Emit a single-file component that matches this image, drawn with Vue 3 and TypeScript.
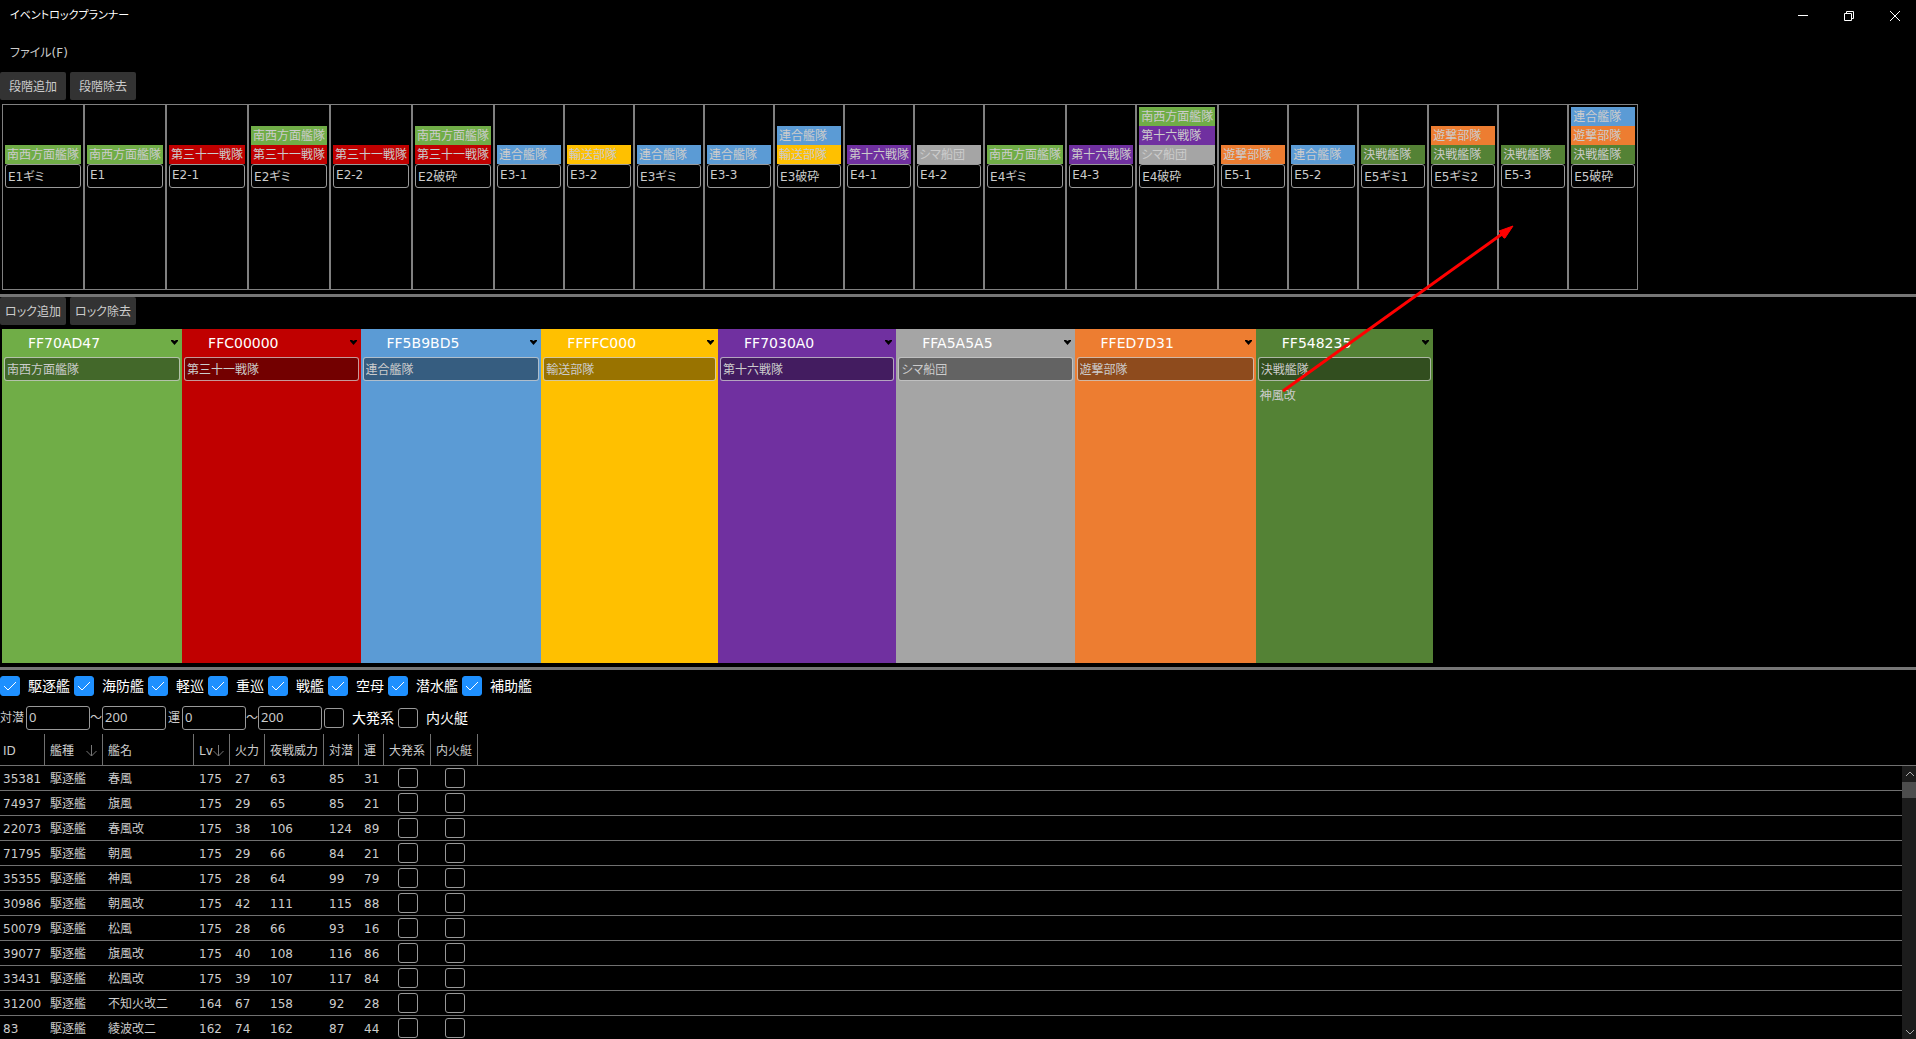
<script setup lang="ts">
import { ref } from 'vue'

interface Lock {
  color: string
  name: string
  ships: string[]
}

interface Stage {
  name: string
  locks: number[]
}

interface Ship {
  id: number
  type: string
  name: string
  lv: number
  fire: number
  night: number
  asw: number
  luck: number
}

const locks = ref<Lock[]>([
  { color: '70AD47', name: '南西方面艦隊', ships: [] },
  { color: 'C00000', name: '第三十一戦隊', ships: [] },
  { color: '5B9BD5', name: '連合艦隊', ships: [] },
  { color: 'FFC000', name: '輸送部隊', ships: [] },
  { color: '7030A0', name: '第十六戦隊', ships: [] },
  { color: 'A5A5A5', name: 'シマ船団', ships: [] },
  { color: 'ED7D31', name: '遊撃部隊', ships: [] },
  { color: '548235', name: '決戦艦隊', ships: ['神風改'] },
])

const palette = locks.value.map((lock) => lock.color)

const stages = ref<Stage[]>([
  { name: 'E1ギミ', locks: [0] },
  { name: 'E1', locks: [0] },
  { name: 'E2-1', locks: [1] },
  { name: 'E2ギミ', locks: [0, 1] },
  { name: 'E2-2', locks: [1] },
  { name: 'E2破砕', locks: [0, 1] },
  { name: 'E3-1', locks: [2] },
  { name: 'E3-2', locks: [3] },
  { name: 'E3ギミ', locks: [2] },
  { name: 'E3-3', locks: [2] },
  { name: 'E3破砕', locks: [2, 3] },
  { name: 'E4-1', locks: [4] },
  { name: 'E4-2', locks: [5] },
  { name: 'E4ギミ', locks: [0] },
  { name: 'E4-3', locks: [4] },
  { name: 'E4破砕', locks: [0, 4, 5] },
  { name: 'E5-1', locks: [6] },
  { name: 'E5-2', locks: [2] },
  { name: 'E5ギミ1', locks: [7] },
  { name: 'E5ギミ2', locks: [6, 7] },
  { name: 'E5-3', locks: [7] },
  { name: 'E5破砕', locks: [2, 6, 7] },
])

const shipTypes = ref(
  ['駆逐艦', '海防艦', '軽巡', '重巡', '戦艦', '空母', '潜水艦', '補助艦'].map((label) => ({
    label,
    checked: true,
  })),
)

const ranges = ref([
  { label: '対潜', min: '0', max: '200' },
  { label: '運', min: '0', max: '200' },
])

const gear = ref([
  { label: '大発系', checked: false },
  { label: '内火艇', checked: false },
])

const columns = [
  { label: 'ID', cls: 'c-id' },
  { label: '艦種', cls: 'c-type', sorted: true },
  { label: '艦名', cls: 'c-name' },
  { label: 'Lv', cls: 'c-lv', sorted: true },
  { label: '火力', cls: 'c-fire' },
  { label: '夜戦威力', cls: 'c-night' },
  { label: '対潜', cls: 'c-asw' },
  { label: '運', cls: 'c-luck' },
  { label: '大発系', cls: 'c-gear' },
  { label: '内火艇', cls: 'c-gear' },
]

const rows: [number, string, number, number, number, number, number][] = [
  [35381, '春風', 175, 27, 63, 85, 31],
  [74937, '旗風', 175, 29, 65, 85, 21],
  [22073, '春風改', 175, 38, 106, 124, 89],
  [71795, '朝風', 175, 29, 66, 84, 21],
  [35355, '神風', 175, 28, 64, 99, 79],
  [30986, '朝風改', 175, 42, 111, 115, 88],
  [50079, '松風', 175, 28, 66, 93, 16],
  [39077, '旗風改', 175, 40, 108, 116, 86],
  [33431, '松風改', 175, 39, 107, 117, 84],
  [31200, '不知火改二', 164, 67, 158, 92, 28],
  [83, '綾波改二', 162, 74, 162, 87, 44],
]

const ships: Ship[] = rows.map(([id, name, lv, fire, night, asw, luck]) => ({
  id,
  type: '駆逐艦',
  name,
  lv,
  fire,
  night,
  asw,
  luck,
}))
</script>

<template>
  <div class="planner">
    <header class="titlebar">
      <span class="title">イベントロックプランナー</span>
      <div class="caption">
        <button type="button" aria-label="最小化">
          <svg width="10" height="10" viewBox="0 0 10 10"><path d="M0 4.5H10" /></svg>
        </button>
        <button type="button" aria-label="元に戻す">
          <svg width="10" height="10" viewBox="0 0 10 10">
            <path d="M.5 2.5H7.5V9.5H.5ZM2.5 2.5V.5H9.5V7.5H7.5" />
          </svg>
        </button>
        <button type="button" aria-label="閉じる">
          <svg width="10" height="10" viewBox="0 0 10 10"><path d="M0 0L10 10M10 0L0 10" /></svg>
        </button>
      </div>
    </header>

    <nav class="menu">
      <button type="button">ファイル(F)</button>
    </nav>

    <div class="actions">
      <button type="button">段階追加</button>
      <button type="button">段階除去</button>
    </div>
    <section class="stages">
      <div v-for="(stage, i) in stages" :key="i" class="stage">
        <div class="chips">
          <span
            v-for="n in stage.locks"
            :key="n"
            class="chip"
            :style="{ backgroundColor: '#' + locks[n].color }"
          >{{ locks[n].name }}</span>
        </div>
        <input v-model="stage.name" class="box" type="text" aria-label="段階名" />
      </div>
    </section>
    <div class="splitter"></div>

    <div class="actions">
      <button type="button">ロック追加</button>
      <button type="button">ロック除去</button>
    </div>
    <section class="locks">
      <div
        v-for="(lock, i) in locks"
        :key="i"
        class="lock"
        :style="{ backgroundColor: '#' + lock.color }"
      >
        <div class="picker">
          <select v-model="lock.color" aria-label="色">
            <option v-for="c in palette" :key="c" :value="c">FF{{ c }}</option>
          </select>
          <svg width="7" height="5" viewBox="0 0 7 5"><path d="M0 0H2L3.5 1L5 0H7V1L3.5 5L0 1Z" /></svg>
        </div>
        <input v-model="lock.name" class="box tinted" type="text" aria-label="ロック名" />
        <ul>
          <li v-for="ship in lock.ships" :key="ship">{{ ship }}</li>
        </ul>
      </div>
    </section>
    <div class="splitter"></div>

    <div class="filters">
      <label v-for="t in shipTypes" :key="t.label" class="check">
        <input v-model="t.checked" type="checkbox" />{{ t.label }}
      </label>
    </div>
    <div class="filters">
      <div v-for="r in ranges" :key="r.label" class="range">
        <label :for="'min-' + r.label">{{ r.label }}</label>
        <input :id="'min-' + r.label" v-model="r.min" class="box number" type="text" />
        <span class="tilde">～</span>
        <input v-model="r.max" class="box number" type="text" :aria-label="r.label + '上限'" />
      </div>
      <label v-for="g in gear" :key="g.label" class="check">
        <input v-model="g.checked" type="checkbox" />{{ g.label }}
      </label>
    </div>

    <section class="grid">
      <div class="viewport">
        <table>
          <colgroup>
            <col v-for="(c, i) in columns" :key="i" :class="c.cls" />
            <col />
          </colgroup>
          <thead>
            <tr>
              <th v-for="c in columns" :key="c.label" scope="col">
                <div class="head">
                  {{ c.label }}
                  <svg v-if="c.sorted" width="11" height="12" viewBox="0 0 11 12">
                    <path d="M5.5 0V11M.5 6L5.5 11L10.5 6" />
                  </svg>
                </div>
              </th>
              <td class="rest"></td>
            </tr>
          </thead>
          <tbody>
            <tr v-for="s in ships" :key="s.id">
              <td>{{ s.id }}</td>
              <td>{{ s.type }}</td>
              <td>{{ s.name }}</td>
              <td>{{ s.lv }}</td>
              <td>{{ s.fire }}</td>
              <td>{{ s.night }}</td>
              <td>{{ s.asw }}</td>
              <td>{{ s.luck }}</td>
              <td class="tick"><input type="checkbox" aria-label="大発系" /></td>
              <td class="tick"><input type="checkbox" aria-label="内火艇" /></td>
              <td></td>
            </tr>
          </tbody>
        </table>
      </div>
      <div class="scrollbar">
        <svg width="16" height="16" viewBox="0 0 16 16"><path d="M4 10L8 6L12 10" /></svg>
        <div class="thumb"></div>
        <svg class="down" width="16" height="16" viewBox="0 0 16 16"><path d="M4 7L8 11L12 7" /></svg>
      </div>
    </section>

    <svg class="drag" width="232" height="168" viewBox="0 0 232 168">
      <path class="shaft" d="M1 166L220 9" />
      <path class="tip" d="M231 1L217 6L219 9L222 13L223 13Z" />
    </svg>
  </div>
</template>

<style>
body {
  background: #000;
}
</style>

<style scoped>
.planner {
  position: relative;
  display: flex;
  flex-direction: column;
  height: 100vh;
  overflow: hidden;
  background: #000;
  color: #ccc;
  font: 12px/18px 'DejaVu Sans', 'Noto Sans CJK JP', sans-serif;
  font-feature-settings: 'palt';
}

.planner > * {
  flex-shrink: 0;
}

button,
input,
select {
  box-sizing: border-box;
  margin: 0;
  padding: 0;
  border: 0;
  border-radius: 0;
  background: none;
  color: inherit;
  font: inherit;
  font-feature-settings: inherit;
}

svg {
  display: block;
  fill: none;
}

.titlebar {
  display: flex;
  justify-content: space-between;
  align-items: center;
  height: 32px;
  padding-left: 10px;
  color: #fff;
}

.title {
  font-size: 11px;
}

.caption {
  display: flex;
  gap: 4px;
}

.caption button {
  display: flex;
  align-items: center;
  justify-content: center;
  width: 42px;
  height: 32px;
}

.caption svg {
  stroke: #fff;
}

.menu {
  box-sizing: border-box;
  display: flex;
  align-items: center;
  height: 40px;
  padding: 2px 0 0 10px;
}

.actions {
  display: flex;
  gap: 4px;
}

.actions button {
  width: 66px;
  height: 28px;
  padding-top: 2px;
  border-radius: 2px;
  background: #333;
  white-space: nowrap;
}

.stages {
  display: flex;
  min-height: 186px;
  margin: 4px 2px;
}

.stage {
  box-sizing: border-box;
  display: flex;
  flex-direction: column;
  min-width: 70px;
  padding: 2px;
  border: 1px solid #808080;
}

.chips {
  display: flex;
  flex-direction: column;
  justify-content: flex-end;
  min-height: 57px;
}

.chip {
  height: 19px;
  padding: 0 2px;
  line-height: 21px;
  white-space: nowrap;
}

.box {
  width: 0;
  min-width: 100%;
  height: 24px;
  padding: 0 2px 2px;
  border: 1px solid #999;
  border-radius: 3px;
  line-height: 20px;
}

.splitter {
  height: 3px;
  background: #767676;
}

.locks {
  display: flex;
  min-height: 334px;
  margin: 4px 2px;
}

.lock {
  display: flex;
  flex-direction: column;
}

.picker {
  position: relative;
  height: 28px;
  color: #fff;
  font-size: 14px;
}

.picker select {
  appearance: none;
  field-sizing: content;
  height: 28px;
  padding: 0 82px 0 26px;
}

.picker option {
  background: #333;
}

.picker svg {
  position: absolute;
  top: 11px;
  right: 4px;
  fill: #000;
}

.tinted {
  min-width: calc(100% - 4px);
  margin: 0 2px;
  border-color: rgba(255, 255, 255, 0.6);
  background: rgba(0, 0, 0, 0.4);
}

.lock ul {
  margin: 0;
  padding: 6px 4px;
  list-style: none;
}

.filters {
  display: flex;
  align-items: center;
  gap: 4px;
  height: 32px;
}

.check {
  display: flex;
  align-items: center;
  gap: 8px;
  color: #fff;
  font-size: 14px;
}

input[type='checkbox'] {
  appearance: none;
  display: block;
  width: 20px;
  height: 20px;
  border: 1px solid #999;
  border-radius: 3px;
}

input[type='checkbox']:checked {
  border-color: #1e90ff;
  background: #1e90ff
    url("data:image/svg+xml,%3Csvg xmlns='http://www.w3.org/2000/svg' viewBox='0 0 18 18'%3E%3Cpath d='M3 9L7 13L15 5' fill='none' stroke='white'/%3E%3C/svg%3E");
}

.range {
  display: flex;
  align-items: center;
  margin-right: -2px;
}

.range label {
  margin-right: 2px;
}

.number {
  width: 64px;
  min-width: 64px;
  font-family: 'Noto Sans', sans-serif;
  font-size: 13px;
}

.tilde {
  width: 12px;
  font-feature-settings: normal;
}

.planner > .grid {
  display: flex;
  flex: 1 1 0;
  min-height: 0;
}

.viewport {
  flex: 1;
  overflow: hidden;
}

table {
  width: 100%;
  table-layout: fixed;
  border-spacing: 0;
}

.c-id {
  width: 45px;
}

.c-type {
  width: 58px;
}

.c-name {
  width: 91px;
}

.c-lv {
  width: 36px;
}

.c-fire,
.c-asw {
  width: 35px;
}

.c-night {
  width: 59px;
}

.c-luck {
  width: 25px;
}

.c-gear {
  width: 47px;
}

th,
td {
  box-sizing: border-box;
  height: 25px;
  padding: 2px 0 0 5px;
  border-bottom: 1px solid #707070;
  font-weight: normal;
  text-align: left;
  white-space: nowrap;
}

th {
  height: 32px;
  padding-right: 5px;
  border-right: 1px solid #707070;
}

th:first-child,
td:first-child {
  padding-left: 3px;
}

.head {
  display: flex;
  align-items: center;
  justify-content: space-between;
}

.head svg {
  flex: none;
  stroke: #777;
}

td.tick {
  padding: 0;
}

.tick input {
  margin: 0 auto;
}

.scrollbar {
  display: flex;
  flex-direction: column;
  width: 14px;
  margin-top: 31px;
  border-top: 1px solid #707070;
  background: #1c1c1c;
  overflow: hidden;
}

.scrollbar svg {
  flex: none;
  stroke: #aaa;
}

.thumb {
  height: 16px;
  background: #4d4d4d;
}

.down {
  margin-top: auto;
}

.drag {
  position: absolute;
  left: 1282px;
  top: 225px;
  pointer-events: none;
}

.shaft {
  stroke: #f00;
  stroke-width: 3;
}

.tip {
  fill: #f00;
  stroke: #f00;
}
</style>
